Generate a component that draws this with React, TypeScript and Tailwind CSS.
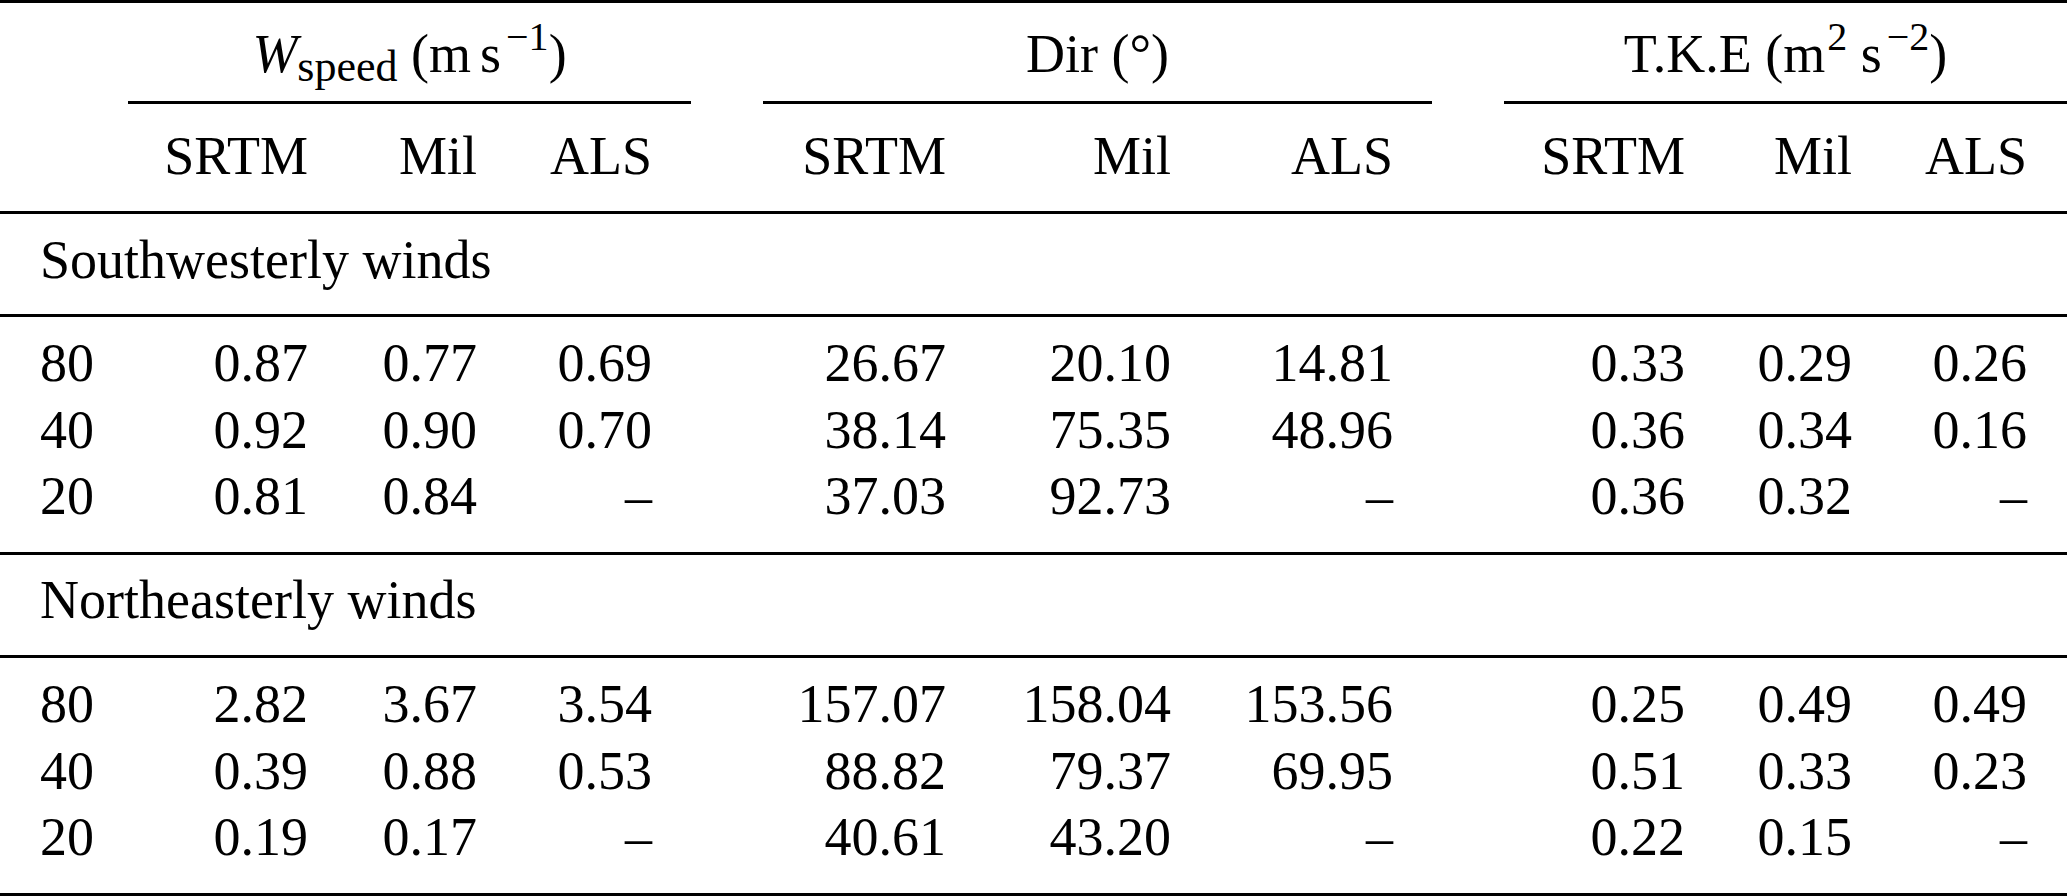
import React from "react";

const COLS =
  "grid grid-cols-[128px_180px_169px_175px_294px_225px_222px_292px_167px_175px_40px]";

function Rule() {
  return <div className="h-[3px] bg-black" />;
}

function DataRow({ label, values }: { label: string; values: string[] }) {
  return (
    <div className={COLS}>
      <div className="pl-[40px] whitespace-nowrap">{label}</div>
      {values.map((v, i) => (
        <div key={i} className="text-right whitespace-nowrap">
          {v}
        </div>
      ))}
      <div />
    </div>
  );
}

function Group({ width, children }: { width: string; children: React.ReactNode }) {
  return (
    <div className={`${width} shrink-0 flex flex-col`}>
      <div className="text-center whitespace-nowrap">{children}</div>
      <div className="mt-[13.5px] h-[3px] bg-black" />
    </div>
  );
}

function Sup({ children, ml }: { children: React.ReactNode; ml: string }) {
  return (
    <span className={`relative top-[-22px] text-[40px] leading-none ${ml}`}>{children}</span>
  );
}

const south: [string, string[]][] = [
  ["80", ["0.87", "0.77", "0.69", "26.67", "20.10", "14.81", "0.33", "0.29", "0.26"]],
  ["40", ["0.92", "0.90", "0.70", "38.14", "75.35", "48.96", "0.36", "0.34", "0.16"]],
  ["20", ["0.81", "0.84", "–", "37.03", "92.73", "–", "0.36", "0.32", "–"]],
];

const north: [string, string[]][] = [
  ["80", ["2.82", "3.67", "3.54", "157.07", "158.04", "153.56", "0.25", "0.49", "0.49"]],
  ["40", ["0.39", "0.88", "0.53", "88.82", "79.37", "69.95", "0.51", "0.33", "0.23"]],
  ["20", ["0.19", "0.17", "–", "40.61", "43.20", "–", "0.22", "0.15", "–"]],
];

export default function App() {
  return (
    <div className="w-[2067px] h-[896px] overflow-hidden bg-white text-black font-['Liberation_Serif','Times_New_Roman',serif] text-[54px] leading-[66.5px]">
      <Rule />
      {/* Group headers */}
      <div className="flex pt-[18px]">
        <div className="w-[128px] shrink-0" />
        <Group width="w-[563px]">
          <span className="italic">W</span>
          <span className="relative top-[9px] text-[44px] leading-none">speed</span> (m
          <span className="ml-[9px]">s</span>
          <Sup ml="ml-[5px]">−1</Sup>)
        </Group>
        <div className="w-[72px] shrink-0" />
        <Group width="w-[669px]">Dir (°)</Group>
        <div className="w-[72px] shrink-0" />
        <Group width="w-[563px]">
          T.K.E (m<Sup ml="ml-[2px]">2</Sup> s<Sup ml="ml-[5px]">−2</Sup>)
        </Group>
      </div>
      {/* Sub headers */}
      <div className={`${COLS} pt-[18.5px] pb-[22px]`}>
        <div />
        <div className="text-right">SRTM</div>
        <div className="text-right">Mil</div>
        <div className="text-right">ALS</div>
        <div className="text-right">SRTM</div>
        <div className="text-right">Mil</div>
        <div className="text-right">ALS</div>
        <div className="text-right">SRTM</div>
        <div className="text-right">Mil</div>
        <div className="text-right">ALS</div>
        <div />
      </div>
      <Rule />
      <div className="pl-[40px] pt-[12.5px] pb-[21.3px] whitespace-nowrap">Southwesterly winds</div>
      <Rule />
      <div className="pt-[13.2px] pb-[22px]">
        {south.map(([l, v]) => (
          <DataRow key={"s" + l} label={l} values={v} />
        ))}
      </div>
      <Rule />
      <div className="pl-[40px] pt-[12.5px] pb-[21.3px] whitespace-nowrap">Northeasterly winds</div>
      <Rule />
      <div className="pt-[13.2px] pb-[22px]">
        {north.map(([l, v]) => (
          <DataRow key={"n" + l} label={l} values={v} />
        ))}
      </div>
      <Rule />
    </div>
  );
}
